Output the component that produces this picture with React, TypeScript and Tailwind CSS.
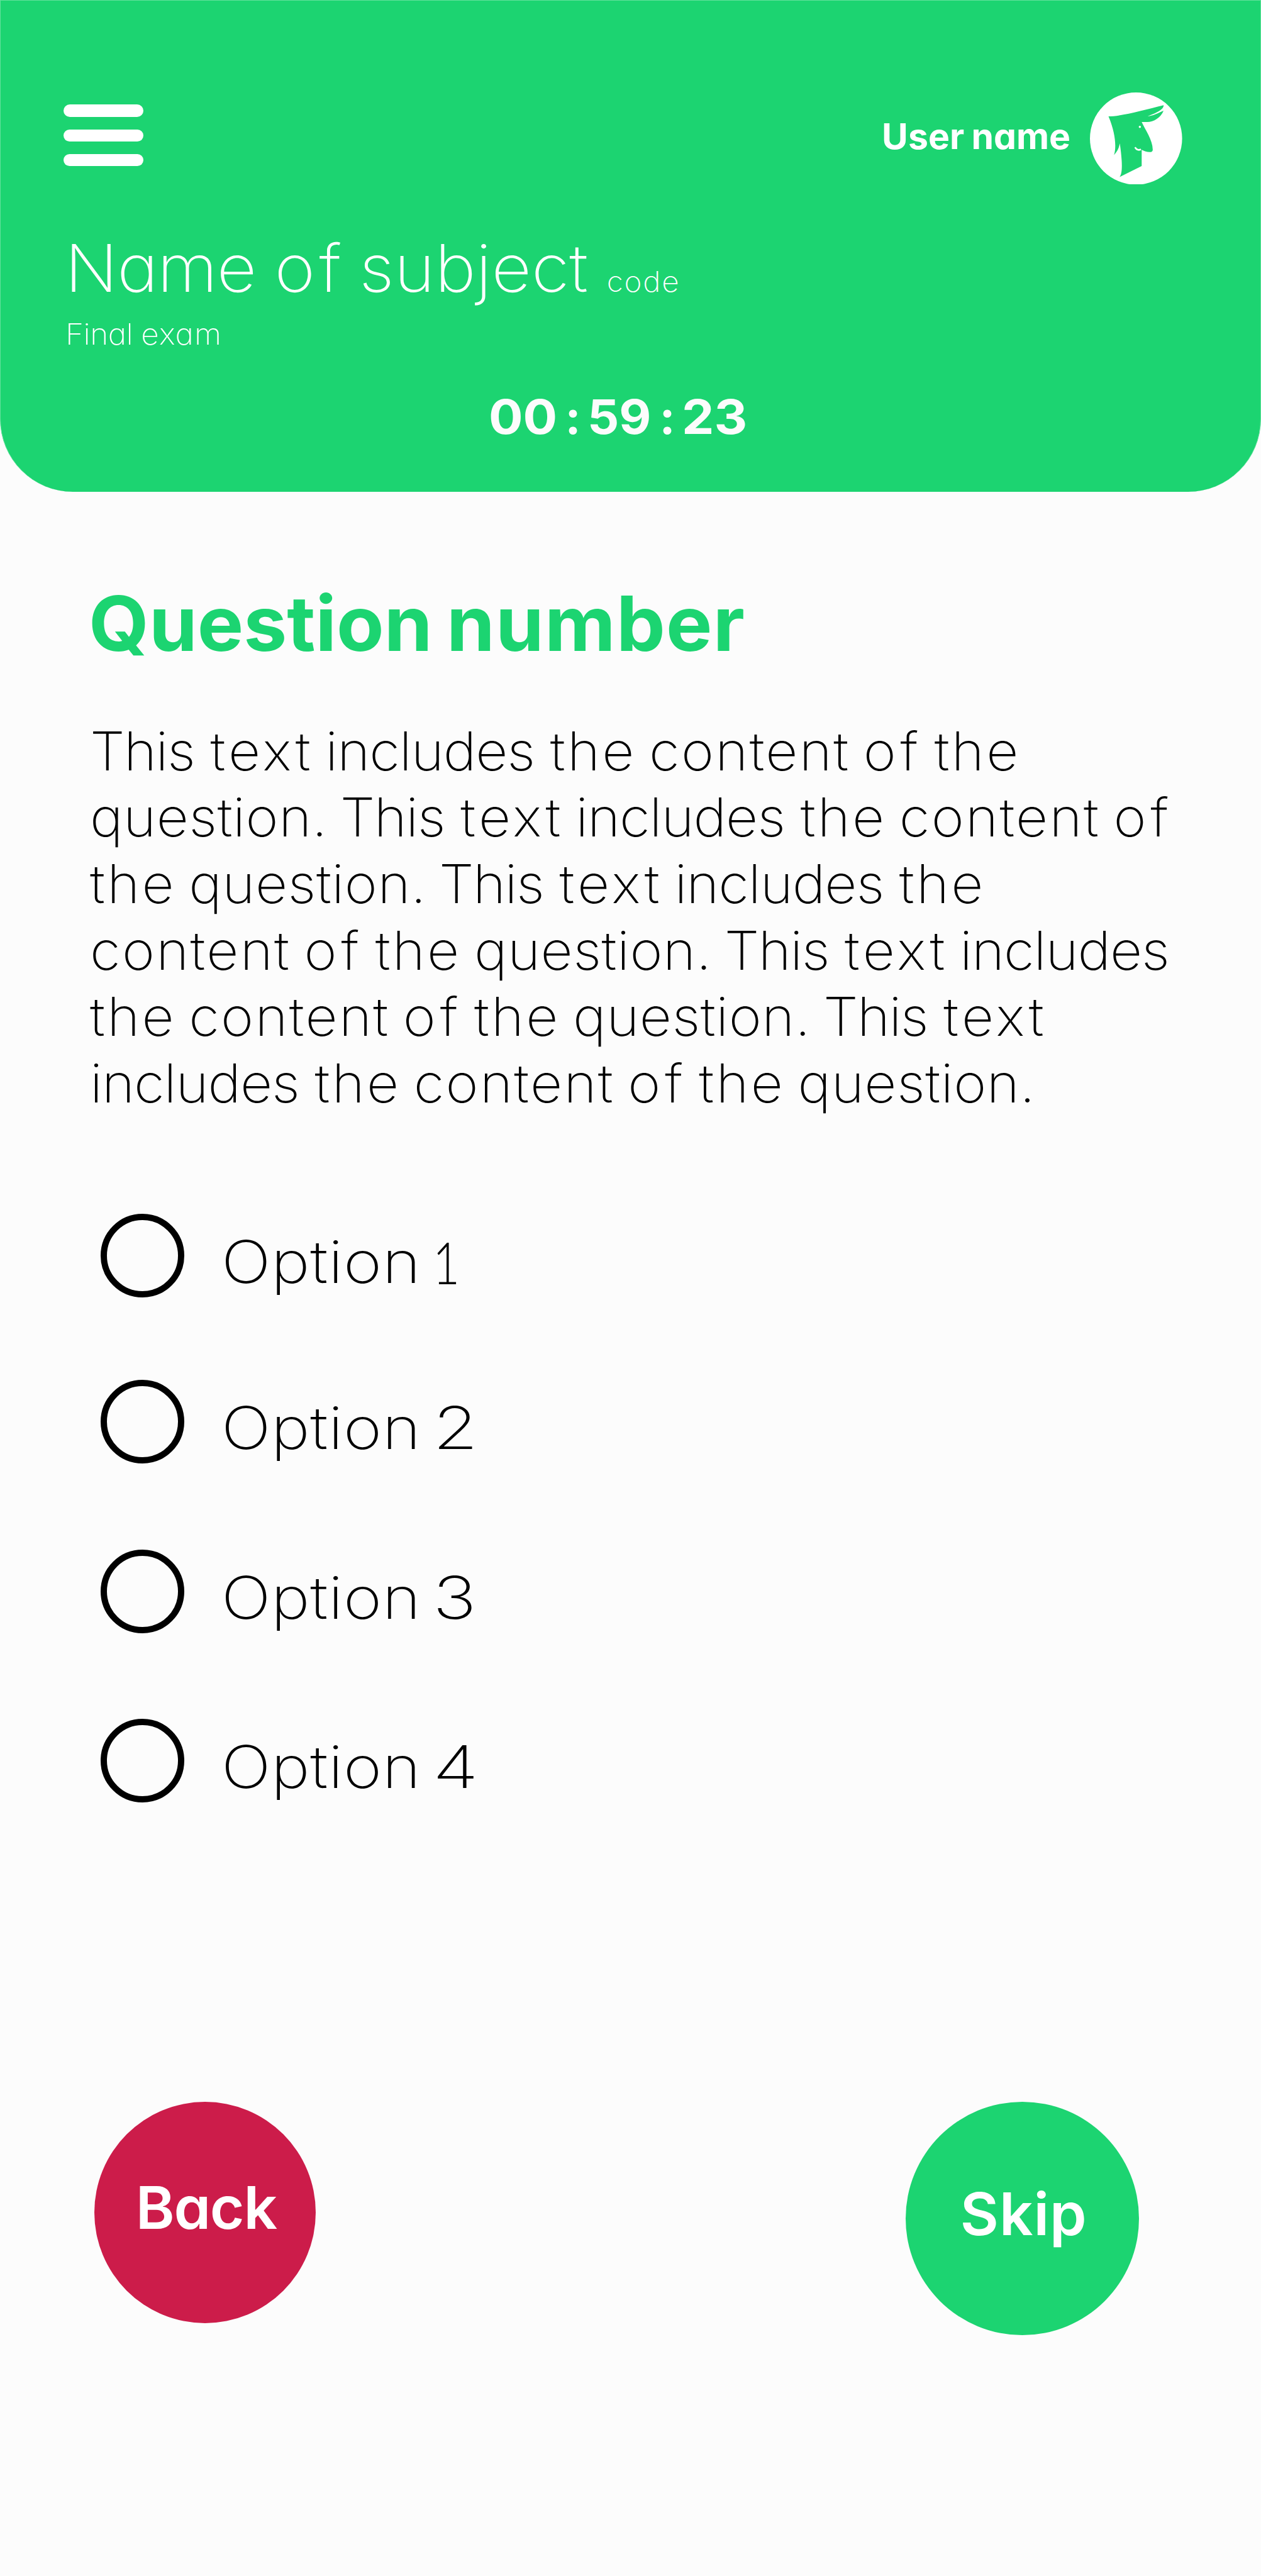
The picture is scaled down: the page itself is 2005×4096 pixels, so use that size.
import { Fragment } from "react";

const bodyTracking: Record<string, string> = {
  This: "tracking-[-1.5px] mr-[1.5px]",
  text: "tracking-[5.1px] -mr-[5.1px]",
  includes: "tracking-[-1px] mr-[1px]",
  the: "tracking-[3.1px] -mr-[3.1px]",
  content: "tracking-[2.2px] -mr-[2.2px]",
  of: "tracking-[6.6px] -mr-[4.6px]",
  "question.": "tracking-[0.5px] -mr-[3.5px]",
};

const questionLines = [
  "This text includes the content of the",
  "question. This text includes the content of",
  "the question. This text includes the",
  "content of the question. This text includes",
  "the content of the question. This text",
  "includes the content of the question.",
];

const options = [
  { digit: "1", style: "font-['Lato',sans-serif] font-light scale-x-[0.8]", gap: "mt-[155px]" },
  { digit: "2", style: "scale-x-[1.26]", gap: "mt-[131.3px]" },
  { digit: "3", style: "scale-x-[1.26]", gap: "mt-[136.8px]" },
  { digit: "4", style: "scale-x-[1.28]", gap: "mt-[136.4px]" },
];

function MenuButton() {
  return (
    <button aria-label="Menu" className="mt-[19.7px] flex h-[98px] w-[127px] flex-col justify-between">
      <span className="h-[19.6px] w-full rounded-full bg-white" />
      <span className="h-[19.6px] w-full rounded-full bg-white" />
      <span className="h-[19.6px] w-full rounded-full bg-white" />
    </button>
  );
}

function Avatar() {
  return (
    <svg viewBox="169 151 750 750" className="h-[146.6px] w-[146.6px] shrink-0">
      <circle cx="544" cy="526" r="375" fill="#fff" />
      <path
        d="M320 346 C440 343 610 294 769 255 C768 289 722 313 638 345 C680 343 720 321 768 300 C745 356 690 392 634 392 L590 392 C619 455 679 538 680 616 C680 631 669 636 655 636 C632 636 608 627 590 618 L590 749 L410 839 C439 806 430 690 412 566 C406 600 393 630 365 660 C386 596 376 478 320 346 Z"
        fill="#1cd471"
      />
      <circle cx="575" cy="431" r="9" fill="#fff" />
      <path d="M536 597 C547 617 566 622 584 614" fill="none" stroke="#fff" strokeWidth="13" />
    </svg>
  );
}

function Header() {
  return (
    <header className="h-[782px] rounded-b-[116px] border-x border-t border-[#62e19c] bg-[#1cd471] pt-[145.8px] text-white">
      <div className="flex items-start justify-between pr-[124px] pl-[100px]">
        <MenuButton />
        <div className="flex items-start">
          <span className="mr-[31px] origin-right scale-x-102 text-[56px] leading-[141px] font-bold whitespace-nowrap">
            <span>User</span>
            <span className="ml-[11px]">name</span>
          </span>
          <Avatar />
        </div>
      </div>
      <h1 className="mt-[72.8px] ml-[101.7px] h-[120px] origin-left scale-x-106 text-[104px] leading-[120px] font-extralight whitespace-nowrap [word-spacing:-2.5px]">
        <span className="mr-[1.2px] tracking-[-1.2px]">Name</span>{" "}
        <span className="-mr-[6.1px] tracking-[6.1px]">of</span> <span>subject</span>
        <span className="ml-[28px] text-[45px] leading-none tracking-[1.7px]">code</span>
      </h1>
      <p className="mt-[14.5px] ml-[103.3px] origin-left scale-x-106 text-[46.8px] leading-[60px] font-extralight whitespace-nowrap [word-spacing:-1.2px]">
        <span className="mr-[0.5px] tracking-[-0.5px]">Final</span> <span className="tracking-[1.1px]">exam</span>
      </p>
      <div className="mt-[57px] flex pl-[775.5px] text-[75px] leading-[90px] font-bold text-[#fcfcfc]">
        <span className="w-[122.1px] origin-left scale-x-108">00</span>
        <span className="w-[35.1px]">:</span>
        <span className="w-[114.8px] origin-left scale-x-105">59</span>
        <span className="w-[35.2px]">:</span>
        <span className="origin-left scale-x-109">23</span>
      </div>
    </header>
  );
}

function QuestionLine({ line }: { line: string }) {
  return (
    <span className="block">
      {line.split(" ").map((word, i) => (
        <Fragment key={i}>
          {i > 0 && " "}
          <span className={bodyTracking[word]}>{word}</span>
        </Fragment>
      ))}
    </span>
  );
}

export default function App() {
  return (
    <div className="h-[4096px] w-[2005px] overflow-hidden bg-[#fcfcfc] font-['Inter',sans-serif] [font-feature-settings:'cv11']">
      <Header />
      <main className="pt-[139.4px]">
        <h2 className="ml-[141.3px] origin-left scale-x-102 text-[121px] leading-[140px] font-bold whitespace-nowrap text-[#1cd471]">
          <span>Question</span>
          <span className="ml-[22px] tracking-[1.2px]">number</span>
        </h2>
        <p className="mt-[80.4px] ml-[143px] origin-left scale-x-[1.045] text-[85px] leading-[105.6px] font-extralight whitespace-nowrap text-black [word-spacing:-1.3px]">
          {questionLines.map((line) => (
            <QuestionLine key={line} line={line} />
          ))}
        </p>
        <div className="pl-[160px] text-[93px] leading-[153px] font-extralight text-black">
          {options.map((option) => (
            <label key={option.digit} className={`flex h-[132.7px] items-start ${option.gap}`}>
              <span className="size-[132.7px] shrink-0 rounded-full border-[10px] border-black" />
              <span className="ml-[59.3px] w-[336px] origin-left scale-x-[1.12] tracking-[0.6px]">Option</span>
              <span className={`origin-left ${option.style}`}>{option.digit}</span>
            </label>
          ))}
        </div>
        <div className="mt-[476.3px] flex items-start justify-between pr-[193.7px] pl-[150.2px] text-[94px] font-semibold text-white">
          <button className="flex size-[352px] items-center justify-center rounded-full bg-[#cc1c4a] pb-[14px] pl-[3px] tracking-[-1.2px]">
            Back
          </button>
          <button className="flex size-[371px] items-center justify-center rounded-full bg-[#1cd471] pb-[14px] pl-[4px] tracking-[1px]">
            Skip
          </button>
        </div>
      </main>
    </div>
  );
}
